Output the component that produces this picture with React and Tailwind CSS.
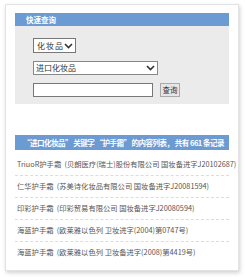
import React, { useState } from "react";

const rows = [
  "TriuoR护手霜  (贝朗医疗(瑞士)股份有限公司 国妆备进字J20102687)",
  "仁华护手霜  (苏美诗化妆品有限公司 国妆备进字J20081594)",
  "印彩护手霜  (印彩贸易有限公司 国妆备进字J20080594)",
  "海蓝护手霜  (欧莱雅以色列 卫妆进字(2004)第0747号)",
  "海蓝护手霜  (欧莱雅以色列 卫妆备进字(2008)第4419号)",
];

function Chevron() {
  return (
    <svg width="9" height="6" viewBox="0 0 9 6" className="shrink-0">
      <path d="M1 1 L4.5 4.5 L8 1" fill="none" stroke="#333" strokeWidth="1.6" />
    </svg>
  );
}

function App() {
  const [keyword, setKeyword] = useState("");

  return (
    <div
      className="w-[245px] h-[277px] bg-white pt-[4px] pl-[5px] overflow-hidden"
      style={{ fontFamily: '"Noto Sans CJK SC", "Liberation Sans", sans-serif' }}
    >
      <div className="w-[234px] h-[267px] bg-white border border-[#e2e2e2] shadow-[1px_2px_4px_rgba(0,0,0,0.18)] pt-[8px] px-[9px]">
        {/* search header */}
        <div className="h-[13px] bg-[#6b9bd2] flex items-center pl-[11px]">
          <span className="text-[7.5px] leading-none font-bold text-white">快速查询</span>
        </div>

        {/* search panel */}
        <div className="h-[78px] bg-[#ebebeb] pt-[12px] pl-[18px] flex flex-col gap-[8px]">
          <div className="w-[43px] h-[15px] bg-white border border-[#777] flex items-center justify-between pl-[3px] pr-[2px]">
            <span className="text-[8px] leading-none text-[#333] tracking-[1px] whitespace-nowrap">化妆品</span>
            <Chevron />
          </div>
          <div className="w-[125px] h-[14px] bg-white border border-[#888] flex items-center justify-between px-[2px]">
            <span className="text-[8px] leading-none text-[#333]">进口化妆品</span>
            <Chevron />
          </div>
          <div className="flex items-center gap-[7px]">
            <input
              value={keyword}
              onChange={(e) => setKeyword(e.target.value)}
              className="w-[120px] h-[14px] bg-white border border-[#777] outline-none"
            />
            <button className="w-[20px] h-[14px] bg-[#e6e6e6] border border-[#aaa] text-[7.5px] leading-none text-[#333] flex items-center justify-center">
              查询
            </button>
          </div>
        </div>

        {/* result header */}
        <div className="mt-[31px] h-[15px] bg-[#6b9bd2] flex items-center pl-[8px]">
          <span className="text-[7.5px] leading-none font-bold text-white whitespace-nowrap tracking-[-0.5px]">
            “进口化妆品” 关键字 “护手霜” 的内容列表， 共有 661 条记录
          </span>
        </div>

        {/* result list */}
        <div className="pt-[4px]">
          {rows.map((r, i) => (
            <div
              key={i}
              className={
                "h-[22px] flex items-center pl-[2px] " +
                (i < rows.length - 1 ? "border-b border-dashed border-[#dcdcdc]" : "")
              }
            >
              <span className="text-[7.3px] leading-none text-[#555] whitespace-pre">{r}</span>
            </div>
          ))}
        </div>
      </div>
    </div>
  );
}

export default App;
